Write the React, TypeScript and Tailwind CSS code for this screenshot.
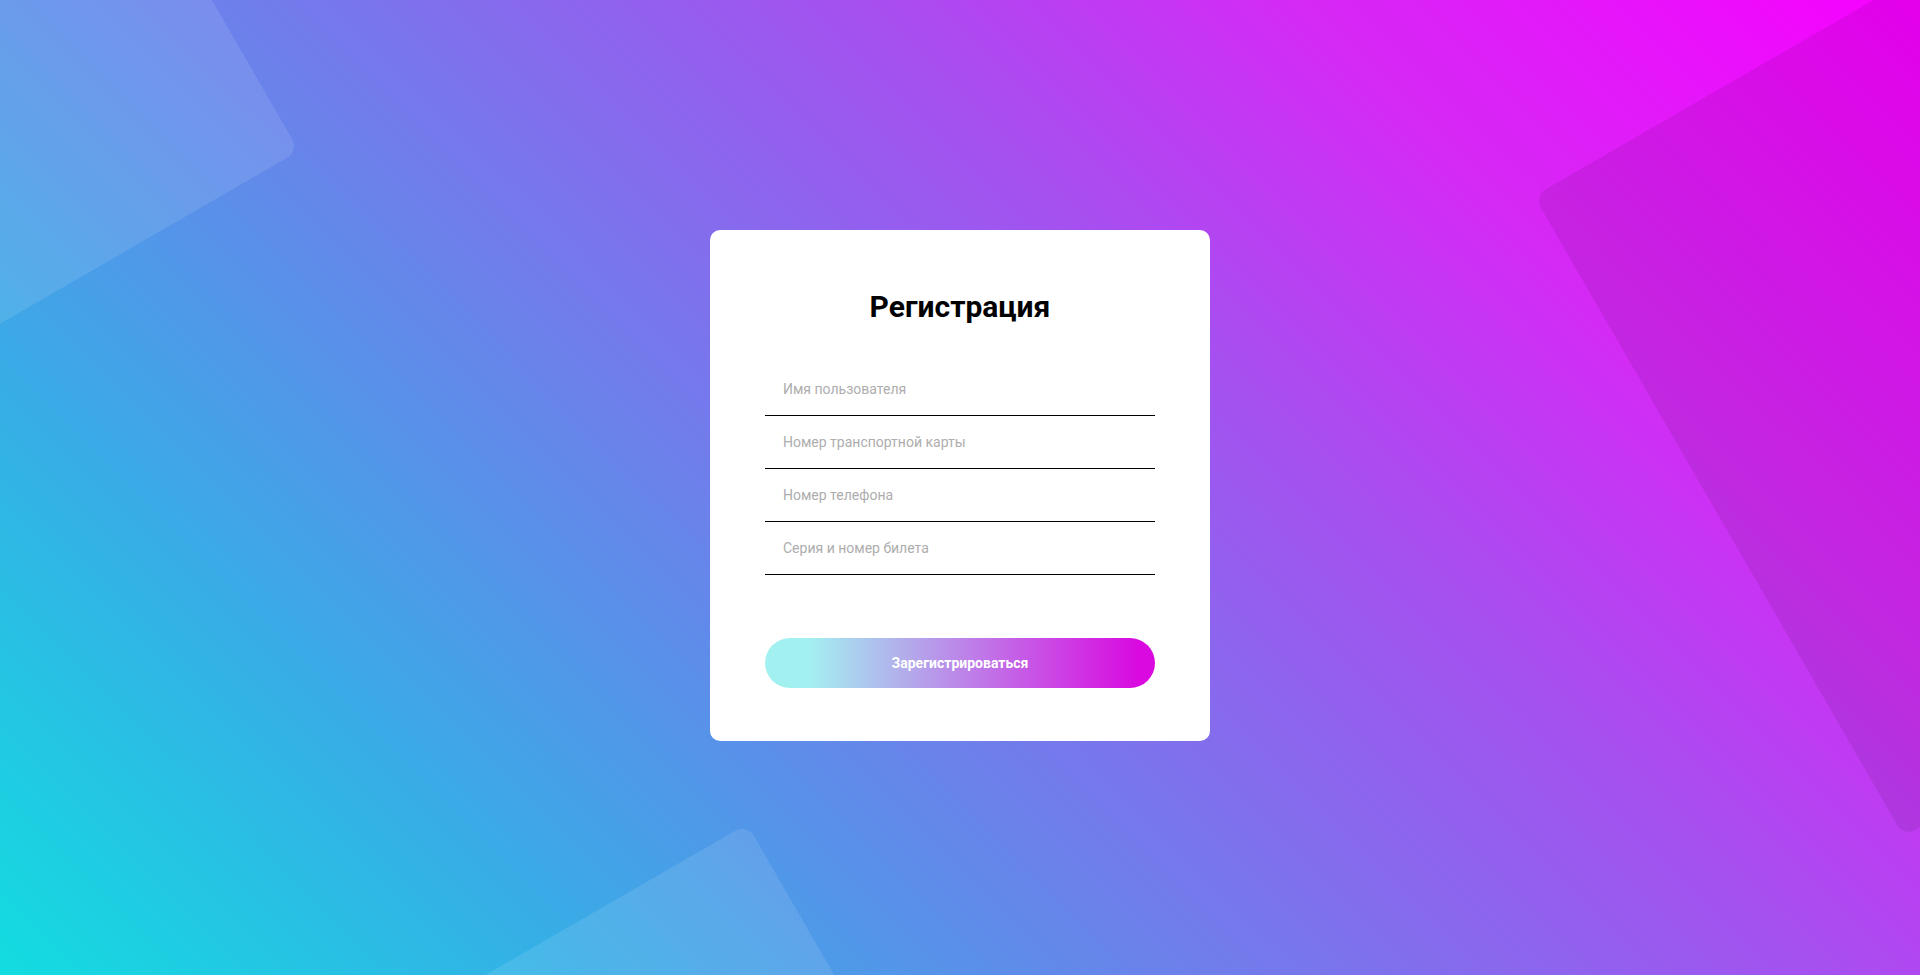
import React, { useState } from 'react';

const FIELDS = [
  { name: 'username', placeholder: 'Имя пользователя' },
  { name: 'card', placeholder: 'Номер транспортной карты' },
  { name: 'phone', placeholder: 'Номер телефона' },
  { name: 'ticket', placeholder: 'Серия и номер билета' },
];

const App: React.FC = () => {
  const [form, setForm] = useState<Record<string, string>>({});

  return (
    <div className="relative min-h-screen overflow-hidden bg-[linear-gradient(45deg,#12dde0_0%,#36aee6_20%,#a84ef0_64%,#d42af5_78%,#f800ff_100%)] font-['Roboto','Liberation_Sans',sans-serif]">
      {/* background tiles */}
      <div className="absolute left-[-301px] top-[-449px] w-[600px] h-[600px] origin-bottom-right rotate-[-30deg] rounded-[14px] bg-white/10" />
      <div className="absolute left-[247px] top-[824px] w-[500px] h-[500px] origin-top-right rotate-[-30deg] rounded-[14px] bg-white/10" />
      <div className="absolute left-[1534px] top-[196px] w-[740px] h-[740px] origin-top-left rotate-[-30deg] rounded-[14px] bg-black/[0.08]" />

      <div className="relative flex min-h-screen items-center justify-center">
        <form
          onSubmit={e => e.preventDefault()}
          className="mb-[4px] w-[500px] rounded-[10px] bg-white px-[55px] pt-[59px] pb-[53px]"
        >
          <h1 className="text-center text-[30px] leading-[36px] font-bold text-black">Регистрация</h1>

          <div className="mt-[38px]">
            {FIELDS.map(f => (
              <input
                key={f.name}
                value={form[f.name] ?? ''}
                onChange={e => setForm({ ...form, [f.name]: e.target.value })}
                placeholder={f.placeholder}
                className="block h-[53px] w-full border-b border-black px-[18px] text-[14px] text-black outline-none placeholder:text-[#adadad]"
              />
            ))}
          </div>

          <button
            type="submit"
            className="mt-[63px] block h-[50px] w-full rounded-full bg-[linear-gradient(90deg,#a3f0f0_11%,#d909e0_96%)] text-[14px] font-bold text-white"
          >
            Зарегистрироваться
          </button>
        </form>
      </div>
    </div>
  );
};

export default App;
